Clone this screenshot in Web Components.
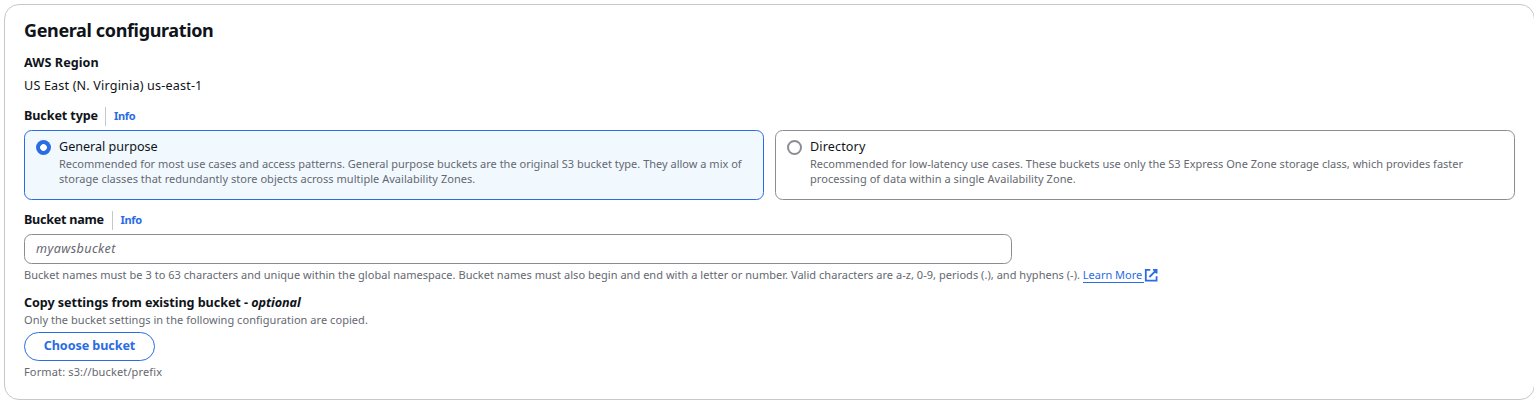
<!DOCTYPE html>
<html lang="en">
<head>
<meta charset="utf-8">
<title>General configuration</title>
<style>
  body { margin: 0; background: #fff; overflow: hidden; font: 12.6px/18px "Noto Sans", "Open Sans", sans-serif; color: #0f141a; }
</style>
</head>
<body>
<s3-panel>
  <span slot="heading">General configuration</span>
  <s3-field style="--gap:5px;--after:12px">
    <span slot="label" style="letter-spacing:.06px">AWS Region</span>
    <span style="letter-spacing:.17px">US East (N. Virginia) us-east-1</span>
  </s3-field>
  <s3-field info style="--gap:5px;--after:11px;--label-width:81px;--info-gap:8px">
    <span slot="label" style="letter-spacing:-.12px">Bucket type</span>
    <s3-tiles>
      <s3-tile checked>
        <span slot="title" style="letter-spacing:-.02px">General purpose</span>
        <span style="letter-spacing:.002px">Recommended for most use cases and access patterns. General purpose buckets are the original S3 bucket type. They allow a mix of</span><br>
        <span style="letter-spacing:.028px">storage classes that redundantly store objects across multiple Availability Zones.</span>
      </s3-tile>
      <s3-tile>
        <span slot="title" style="letter-spacing:.13px">Directory</span>
        <span style="letter-spacing:.012px">Recommended for low-latency use cases. These buckets use only the S3 Express One Zone storage class, which provides faster</span><br>
        <span style="letter-spacing:.055px">processing of data within a single Availability Zone.</span>
      </s3-tile>
    </s3-tiles>
  </s3-field>
  <s3-field info style="--gap:5px;--after:12px;--label-width:88px;--info-gap:7.5px">
    <span slot="label" style="letter-spacing:-.26px">Bucket name</span>
    <s3-input>myawsbucket</s3-input>
    <s3-hint slot="hint" style="letter-spacing:.034px;margin-top:3px">Bucket names must be 3 to 63 characters and unique within the global namespace. Bucket names must also begin and end with a letter or number. Valid characters are a-z, 0-9, periods (.), and hyphens (-). <s3-link>Learn More</s3-link></s3-hint>
  </s3-field>
  <s3-field style="--gap:0px">
    <span slot="label" style="letter-spacing:-.06px">Copy settings from existing bucket - <i>optional</i></span>
    <s3-hint style="letter-spacing:.05px;margin-bottom:5px">Only the bucket settings in the following configuration are copied.</s3-hint>
    <s3-button>Choose bucket</s3-button>
    <s3-hint slot="hint" style="letter-spacing:.14px;margin-top:3px">Format: s3://bucket/prefix</s3-hint>
  </s3-field>
</s3-panel>

<script>
const define = (name, html) => {
  const template = document.createElement("template");
  template.innerHTML = html;
  customElements.define(name, class extends HTMLElement {
    constructor() {
      super();
      this.attachShadow({ mode: "open" }).append(template.content.cloneNode(true));
    }
  });
};

define("s3-panel", `
  <style>
    :host { display: block; box-sizing: border-box; height: 396px; margin: 4px -1px 0 4px; padding: 14px 19px 0 19px; border: 1px solid #c6c6cd; border-radius: 15px; }
    h2 { margin: 0 0 13px; font-size: 18px; line-height: 22px; letter-spacing: -.36px; }
  </style>
  <h2><slot name="heading"></slot></h2>
  <slot></slot>`);

define("s3-field", `
  <style>
    :host { display: block; margin-bottom: var(--after, 0); }
    .head { display: flex; align-items: flex-start; height: 18px; margin-bottom: var(--gap, 0); font-weight: 700; }
    .label { min-width: var(--label-width, 0); white-space: nowrap; }
    .info { display: none; height: 19px; padding-left: var(--info-gap); border-left: 1px solid #c6c6cd; color: #2a6ce4; font-size: 11px; line-height: 17px; letter-spacing: -.35px; }
    :host([info]) .info { display: block; }
  </style>
  <div class="head"><div class="label"><slot name="label"></slot></div><div class="info">Info</div></div>
  <slot></slot>
  <slot name="hint"></slot>`);

define("s3-tiles", `
  <style>
    :host { display: grid; grid-template-columns: 740px 740px; gap: 11px; }
  </style>
  <slot></slot>`);

define("s3-tile", `
  <style>
    :host { display: flex; box-sizing: border-box; height: 70px; padding: 6px 11px; gap: 8px; border: 1px solid #8c8c94; border-radius: 7.5px; }
    :host([checked]) { background: #f1f9ff; border-color: #2a6ce4; }
    .radio { flex: none; box-sizing: border-box; width: 15px; height: 15px; margin-top: 3px; border: 2px solid #8c8c94; border-radius: 50%; background: #fff; }
    :host([checked]) .radio { border: none; background: radial-gradient(circle, #fff 3px, #2a6ce4 3.7px); }
    .title { padding-top: 1px; }
    .description { color: #656871; font-size: 11px; line-height: 15px; white-space: nowrap; }
  </style>
  <div class="radio"></div>
  <div>
    <div class="title"><slot name="title"></slot></div>
    <div class="description"><slot></slot></div>
  </div>`);

define("s3-input", `
  <style>
    :host { display: flex; align-items: center; box-sizing: border-box; width: 988px; height: 30px; padding: 0 11px 1px; border: 1px solid #8c8c94; border-radius: 7.5px; color: #656871; font-style: italic; letter-spacing: .4px; }
  </style>
  <slot></slot>`);

define("s3-hint", `
  <style>
    :host { display: block; color: #656871; font-size: 11px; line-height: 15px; white-space: nowrap; }
  </style>
  <slot></slot>`);

define("s3-link", `
  <style>
    :host { display: inline-flex; height: 15px; vertical-align: top; color: #2a6ce4; letter-spacing: -.02px; }
    .text { box-sizing: border-box; height: 16px; padding-right: 2px; border-bottom: 1px solid; }
    svg { width: 14.4px; height: 14.4px; margin: .8px 0 0 .2px; fill: none; stroke: currentColor; stroke-width: 2; }
  </style>
  <span class="text"><slot></slot></span><svg viewBox="0 0 16 16"><path d="M10 2h4v4M6 10l8-8M14 9.05V14H2V2h5"/></svg>`);

define("s3-button", `
  <style>
    :host { display: flex; align-items: center; justify-content: center; box-sizing: border-box; width: 131px; height: 29px; padding-bottom: 2px; border: 1px solid #2a6ce4; border-radius: 15px; color: #2a6ce4; font-weight: 700; letter-spacing: -.08px; }
  </style>
  <slot></slot>`);
</script>
</body>
</html>
